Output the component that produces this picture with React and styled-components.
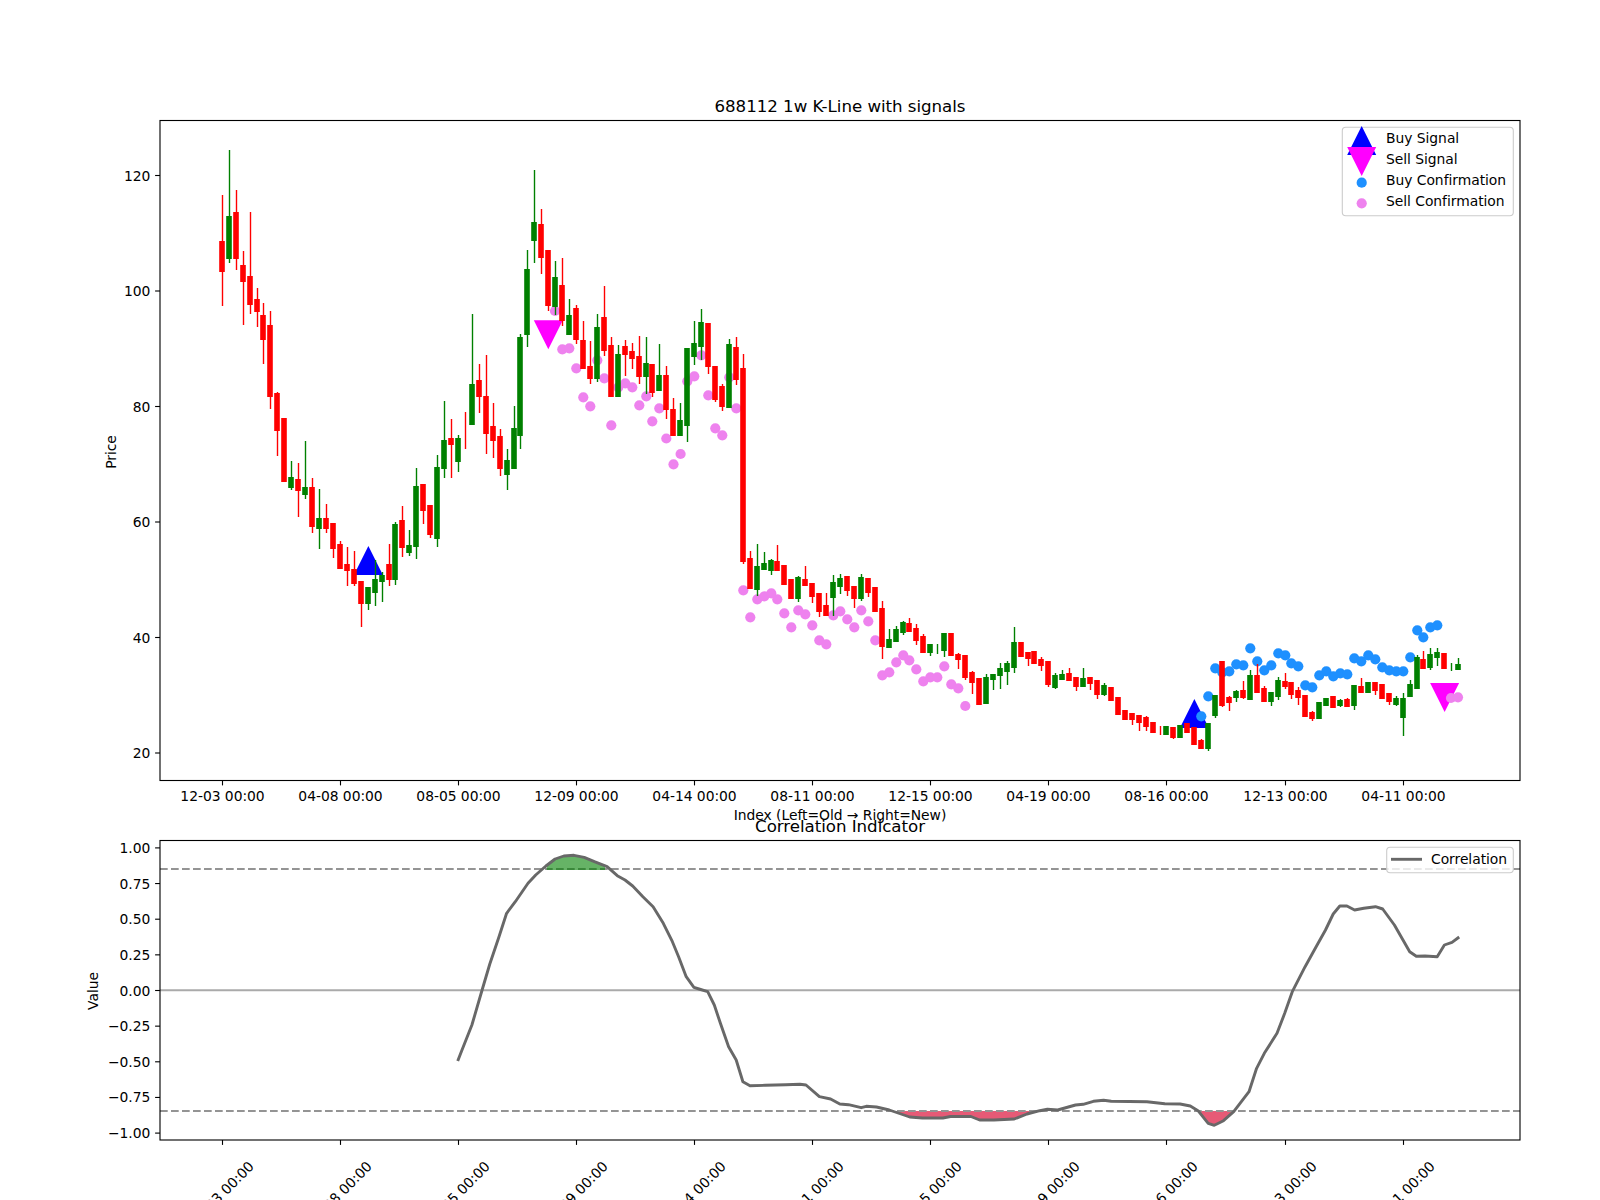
import React from 'react';
import styled, { createGlobalStyle } from 'styled-components';

const GlobalStyle = createGlobalStyle`
  html, body {
    margin: 0;
    background: #fff;
  }
`;

const Figure = styled.div`
  display: flex;
  flex-direction: column;
  width: 1600px;
  height: 1200px;
  overflow: hidden;
  background: #fff;
  font-family: "DejaVu Sans", sans-serif;
`;

const PriceChart = styled.svg`
  display: block;
  flex: none;
  width: 1600px;
  height: 822px;
  overflow: visible;
`;

const CorrelationChart = styled.svg`
  display: block;
  flex: none;
  width: 1600px;
  height: 378px;
  overflow: visible;
`;

const Frame = styled.rect`
  fill: none;
  stroke: #000;
  stroke-width: 1.11px;
`;

const Tick = styled.line`
  stroke: #000;
  stroke-width: 1.11px;
`;

const Label = styled.text`
  font-family: "DejaVu Sans", sans-serif;
  font-size: 13.89px;
  letter-spacing: -0.04px;
  fill: #000;
  text-anchor: ${({ $anchor }) => $anchor || 'middle'};
`;

const Title = styled(Label)`
  font-size: 16.67px;
`;

const Wick = styled.line`
  stroke: ${({ $tone }) => $tone};
  stroke-width: 1.39px;
`;

const Body = styled.rect`
  fill: ${({ $tone }) => $tone};
`;

const Dot = styled.circle`
  fill: ${({ $tone }) => $tone};
`;

const Arrow = styled.polygon`
  fill: ${({ $tone }) => $tone};
`;

const LegendBox = styled.rect`
  fill: rgba(255, 255, 255, 0.8);
  stroke: #ccc;
  stroke-width: 1.11px;
`;

const RefLine = styled.line`
  stroke: ${({ $dashed }) => ($dashed ? '#949494' : '#aaa')};
  stroke-width: 2.08px;
  stroke-dasharray: ${({ $dashed }) => ($dashed ? '7.7 3.3' : 'none')};
`;

const Area = styled.polygon`
  fill: ${({ $tone }) => $tone};
`;

const CurveLine = styled.polyline`
  fill: none;
  stroke: #686868;
  stroke-width: 2.9px;
  stroke-linejoin: round;
`;

const LegendLine = styled.line`
  stroke: #686868;
  stroke-width: 2.9px;
`;

const RED = '#ff0000';
const GREEN = '#008000';
const BLUE = '#0000ff';
const MAGENTA = '#ff00ff';
const DODGER = '#1e90ff';
const VIOLET = '#ee82ee';

// one row per candle: colour, body top, body bottom, wick top, wick bottom (page pixels)
const CANDLES = [
  ['r', 241, 272, 195, 306], ['g', 216, 259, 150, 263], ['r', 212, 259, 190, 270], ['r', 265, 282, 251, 325],
  ['r', 276, 305, 212, 314], ['r', 299, 312, 288, 327], ['r', 315, 340, 303, 364], ['r', 325, 397, 311, 409],
  ['r', 393, 431, 392, 456], ['r', 418, 482, 418, 482], ['g', 477, 488, 461, 490], ['r', 479, 491, 463, 517],
  ['g', 487, 495, 441, 499], ['r', 487, 527, 478, 533], ['g', 518, 529, 489, 549], ['r', 518, 529, 504, 533],
  ['r', 523, 549, 523, 558], ['r', 544, 569, 541, 569], ['r', 564, 571, 547, 586], ['r', 569, 584, 551, 586],
  ['r', 581, 604, 581, 627], ['g', 587, 604, 587, 610], ['g', 579, 593, 560, 606], ['g', 575, 582, 572, 602],
  ['r', 564, 580, 544, 586], ['g', 524, 580, 522, 585], ['r', 520, 548, 506, 557], ['g', 545, 553, 530, 556],
  ['g', 486, 547, 468, 559], ['r', 484, 511, 484, 524], ['r', 505, 535, 505, 538], ['g', 467, 539, 455, 547],
  ['g', 440, 469, 401, 478], ['r', 438, 445, 419, 478], ['g', 438, 462, 435, 472], ['r', 430, 430, 412, 449],
  ['g', 384, 425, 314, 425], ['r', 380, 397, 364, 413], ['r', 396, 434, 355, 454], ['r', 426, 441, 403, 458],
  ['r', 436, 469, 429, 476], ['g', 460, 475, 449, 490], ['g', 428, 469, 406, 469], ['g', 337, 436, 334, 449],
  ['g', 269, 335, 250, 347], ['g', 222, 241, 170, 263], ['r', 224, 258, 209, 274], ['r', 250, 306, 250, 311],
  ['g', 277, 307, 261, 315], ['r', 285, 321, 258, 326], ['g', 315, 335, 299, 335], ['r', 308, 340, 305, 344],
  ['r', 340, 369, 321, 369], ['r', 366, 379, 341, 384], ['g', 327, 379, 314, 382], ['r', 317, 351, 286, 356],
  ['r', 345, 397, 337, 397], ['g', 354, 397, 345, 397], ['r', 346, 355, 340, 376], ['r', 351, 359, 343, 369],
  ['r', 356, 377, 336, 384], ['g', 363, 377, 337, 394], ['r', 364, 393, 364, 397], ['g', 375, 391, 344, 391],
  ['r', 375, 410, 366, 419], ['r', 409, 436, 398, 436], ['g', 420, 436, 403, 436], ['g', 348, 426, 348, 442],
  ['g', 343, 357, 321, 365], ['g', 322, 347, 309, 360], ['r', 323, 367, 323, 374], ['r', 366, 400, 366, 402],
  ['r', 386, 407, 384, 411], ['g', 344, 408, 339, 408], ['r', 347, 380, 337, 385], ['r', 368, 562, 354, 564],
  ['r', 558, 589, 551, 589], ['g', 566, 590, 544, 596], ['g', 563, 570, 552, 570], ['g', 560, 571, 559, 575],
  ['r', 561, 571, 545, 571], ['r', 565, 585, 565, 585], ['r', 579, 599, 579, 599], ['g', 577, 599, 576, 602],
  ['r', 579, 586, 566, 586], ['r', 583, 597, 583, 603], ['r', 593, 612, 593, 617], ['r', 605, 616, 593, 616],
  ['g', 582, 598, 575, 616], ['g', 578, 587, 574, 594], ['r', 576, 591, 576, 596], ['r', 586, 599, 586, 608],
  ['g', 577, 599, 574, 601], ['r', 578, 593, 578, 597], ['r', 587, 612, 587, 612], ['r', 608, 647, 601, 659],
  ['g', 639, 648, 629, 648], ['g', 629, 642, 626, 642], ['g', 622, 633, 621, 635], ['r', 623, 632, 618, 632],
  ['r', 628, 641, 624, 645], ['r', 636, 653, 634, 653], ['g', 644, 653, 644, 656], ['g', 650, 650, 644, 654],
  ['g', 633, 651, 633, 657], ['r', 633, 656, 633, 656], ['r', 654, 660, 653, 669], ['r', 655, 678, 655, 680],
  ['r', 672, 683, 671, 694], ['r', 678, 705, 678, 705], ['g', 677, 704, 674, 704], ['g', 674, 680, 674, 690],
  ['g', 668, 676, 663, 689], ['g', 663, 672, 661, 685], ['g', 642, 668, 627, 673], ['r', 642, 657, 642, 657],
  ['r', 652, 659, 652, 666], ['r', 651, 664, 651, 664], ['r', 659, 666, 657, 671], ['r', 661, 685, 661, 687],
  ['g', 675, 688, 673, 689], ['g', 674, 680, 670, 680], ['r', 673, 681, 668, 681], ['r', 677, 687, 677, 691],
  ['g', 678, 687, 668, 687], ['r', 677, 684, 677, 690], ['r', 680, 695, 680, 699], ['g', 685, 695, 683, 696],
  ['r', 687, 701, 687, 701], ['r', 697, 715, 697, 715], ['r', 710, 720, 710, 720], ['r', 713, 720, 713, 725],
  ['r', 715, 723, 715, 731], ['r', 717, 727, 716, 731], ['r', 722, 733, 722, 733], ['r', 730, 730, 726, 735],
  ['g', 726, 735, 726, 735], ['r', 727, 738, 727, 739], ['g', 725, 738, 725, 738], ['r', 723, 733, 723, 733],
  ['r', 727, 745, 727, 745], ['r', 740, 749, 739, 749], ['g', 723, 749, 723, 751], ['g', 695, 716, 695, 718],
  ['r', 661, 706, 661, 707], ['r', 697, 703, 696, 711], ['g', 691, 698, 690, 702], ['r', 690, 698, 681, 699],
  ['g', 675, 700, 670, 700], ['r', 675, 693, 664, 693], ['r', 688, 702, 686, 702], ['g', 692, 702, 692, 706],
  ['g', 680, 697, 677, 700], ['r', 681, 687, 673, 689], ['r', 682, 695, 682, 699], ['r', 690, 698, 687, 705],
  ['r', 695, 717, 695, 717], ['r', 712, 719, 711, 721], ['g', 702, 719, 702, 719], ['g', 698, 706, 698, 706],
  ['r', 696, 708, 696, 708], ['g', 700, 706, 699, 707], ['r', 699, 707, 698, 707], ['g', 685, 706, 685, 710],
  ['r', 686, 693, 678, 693], ['g', 682, 693, 682, 693], ['r', 682, 691, 682, 695], ['r', 684, 699, 684, 699],
  ['r', 693, 702, 693, 705], ['g', 698, 705, 696, 706], ['g', 698, 718, 693, 736], ['g', 684, 697, 680, 697],
  ['g', 657, 689, 655, 689], ['r', 659, 669, 651, 669], ['g', 654, 668, 648, 670], ['g', 652, 658, 648, 666],
  ['r', 653, 669, 653, 669], ['g', 667, 667, 663, 671], ['g', 664, 670, 658, 670],
];

const SELL_DOTS = [
  [555, 311], [562.3, 349.3], [569.3, 348.3], [576.3, 368.3], [583.3, 397.3], [590.3, 406.3], [597.3, 360.3],
  [604.3, 378.3], [611.3, 425.3], [618.3, 387.3], [625.3, 383.3], [632.3, 387.3], [639.3, 405.3], [646.3, 396.3],
  [652.3, 421.3], [659.3, 408.3], [666.3, 438.5], [673.5, 464.3], [680.6, 454], [687.3, 381.3], [694.3, 376.3],
  [701.3, 355.3], [708.3, 395.3], [715.3, 428.3], [722.3, 435.3], [729.3, 377.3], [736.3, 408.3], [743.3, 590.3],
  [750.3, 617.3], [757.3, 599.3], [764.3, 596.3], [771.3, 593.3], [777.3, 599.3], [784.3, 613.3], [791.3, 627.3],
  [798.3, 610.3], [805.3, 614.3], [812.3, 625.3], [819.3, 640.3], [826.3, 644.3], [833.3, 615.3], [840.3, 611.3],
  [847.3, 619.3], [854.3, 627.3], [861.3, 610.3], [868.3, 621.3], [875.3, 640.3], [882.3, 675.3], [889.3, 672.3],
  [896.3, 662.3], [903.3, 655.3], [909.3, 660.3], [916.3, 669.3], [923.3, 681.3], [930.3, 677.3], [937.3, 677.3],
  [944.3, 666.3], [951.3, 684.3], [958.3, 688.3], [965.3, 706], [1451, 698], [1458, 697.3],
];

const BUY_DOTS = [
  [1201.3, 716.3], [1208.3, 696.3], [1215.3, 668.3], [1222.3, 672.3], [1229.3, 671.3], [1236.3, 664.3],
  [1243.3, 665.3], [1250.3, 648.3], [1257.3, 661.3], [1264.3, 670.3], [1271.3, 665.3], [1278.3, 653.3],
  [1285.3, 655.3], [1291.3, 663.3], [1298.3, 666.3], [1305.3, 685.3], [1312.3, 687.3], [1319.3, 675.3],
  [1326.3, 671.3], [1333.3, 676.3], [1340.3, 673.3], [1347.3, 674.3], [1354.3, 658.3], [1361.3, 661.3],
  [1368.3, 655.3], [1375.3, 659.3], [1382.3, 667.3], [1389.3, 670.3], [1396.3, 671.3], [1403.3, 671.3],
  [1410.3, 657.3], [1417.3, 630.3], [1423.3, 637.3], [1430.3, 627.3], [1437.3, 625.3],
];

const CURVE = [
  [457.7, 1061], [461.7, 1050.7], [471.9, 1025], [482.1, 990], [489.8, 964], [499, 936.7], [506.6, 913.3],
  [515.3, 901.7], [528, 883.3], [535.7, 875], [545.9, 866], [555.1, 859], [563.8, 856], [574, 855.3],
  [584.2, 857.3], [594.4, 861.7], [607.1, 866.7], [617.3, 875.7], [625, 880], [632.7, 886], [642.9, 896.7],
  [653.1, 906.7], [663.3, 923.3], [672.4, 941.7], [678.6, 956.7], [686.2, 976.7], [693.9, 987.3], [699, 989],
  [707.7, 991.7], [714.3, 1005], [720.4, 1023.3], [728.6, 1046.7], [736.2, 1060], [742.9, 1081.7], [750, 1085.7],
  [765.3, 1085.3], [785.7, 1084.7], [800, 1084.3], [806, 1085], [819.4, 1096.7], [830.6, 1099], [839.8, 1104],
  [848.5, 1104.7], [861.2, 1107.7], [866.3, 1106.3], [876.5, 1107], [889.3, 1110], [899.5, 1113.5], [909.7, 1117],
  [922.4, 1118], [942.9, 1118], [950.5, 1116.5], [970.9, 1116.5], [979.6, 1120], [993.9, 1120], [1014.3, 1119],
  [1027, 1114], [1039.8, 1110.7], [1047.4, 1109.3], [1057.7, 1110], [1075.5, 1105], [1083.2, 1104.3], [1093.4, 1101.3],
  [1103.6, 1100.3], [1111.2, 1101.3], [1146.9, 1101.7], [1164.8, 1103.7], [1180.1, 1104], [1190.3, 1106], [1198, 1110.7],
  [1208.2, 1123.3], [1214.3, 1125.3], [1223.5, 1120.7], [1233.7, 1111.7], [1249, 1091.7], [1256.6, 1068.3],
  [1264.3, 1053.3], [1277, 1033.3], [1284.7, 1013.3], [1292.3, 991.7], [1305.1, 966.7], [1315.3, 948.3],
  [1325.5, 930], [1333.2, 914], [1339.8, 906], [1346.9, 906], [1354.6, 910], [1363.8, 908.3], [1375.5, 906.7],
  [1382.7, 909], [1394.4, 925], [1409.7, 951.7], [1416.3, 956.3], [1425, 956], [1437.2, 956.7], [1444.4, 945],
  [1452, 942.3], [1459.2, 937],
];

const DATES = ['12-03', '04-08', '08-05', '12-09', '04-14', '08-11', '12-15', '04-19', '08-16', '12-13', '04-11'];
const PRICE_TICKS = [[120, 175.5], [100, 291], [80, 406.5], [60, 522], [40, 637.5], [20, 753]];
const VALUE_TICKS = ['1.00', '0.75', '0.50', '0.25', '0.00', '\u22120.25', '\u22120.50', '\u22120.75', '\u22121.00'];
const HIGH = 869;
const LOW = 1111;

// the candles fall on whole pixels, so the spacing runs 7,7,7,... with a 6 now and then
const candleX = (i) => Math.floor(222.31 + 6.946 * i);
const tickX = (n) => candleX(n * 17) + 0.5;
const toPoints = (list) => list.map(([x, y]) => `${x},${y}`).join(' ');
const upArrow = (x, y) => toPoints([[x, y], [x - 14.5, y + 29], [x + 14.5, y + 29]]);
const downArrow = (x, y) => toPoints([[x - 14.5, y], [x + 14.5, y], [x, y + 29]]);

// curve section between two x values, closed along the threshold line
const areaPoints = (from, to, level) => {
  const inner = CURVE.filter(([x]) => x > from && x < to);
  const at = (x) => {
    const next = CURVE.findIndex(([px]) => px >= x);
    const [x0, y0] = CURVE[next - 1];
    const [x1, y1] = CURVE[next];
    return y0 + ((x - x0) / (x1 - x0)) * (y1 - y0);
  };
  return toPoints([[from, level], [from, at(from)], ...inner, [to, at(to)], [to, level]]);
};

function Candle({ index, row }) {
  const [kind, top, bottom, high, low] = row;
  const tone = kind === 'r' ? RED : GREEN;
  const x = candleX(index);
  return (
    <g>
      <Wick $tone={tone} x1={x + 0.5} x2={x + 0.5} y1={high} y2={low} />
      <Body $tone={tone} x={x - 2.8} width={5.6} y={top} height={bottom - top} />
    </g>
  );
}

function SignalLegend() {
  const rows = ['Buy Signal', 'Sell Signal', 'Buy Confirmation', 'Sell Confirmation'];
  return (
    <g>
      <LegendBox x={1342.3} y={127.3} width={171} height={88.4} rx={3.5} />
      <Arrow $tone={BLUE} points={upArrow(1361.7, 126)} />
      <Arrow $tone={MAGENTA} points={downArrow(1361.7, 147)} />
      <Dot $tone={DODGER} cx={1361.7} cy={182.7} r={5.1} />
      <Dot $tone={VIOLET} cx={1361.7} cy={203.3} r={5.1} />
      {rows.map((text, n) => (
        <Label key={text} $anchor="start" x={1386} y={143.2 + n * 20.8}>{text}</Label>
      ))}
    </g>
  );
}

export default function App() {
  return (
    <Figure>
      <GlobalStyle />
      <PriceChart viewBox="0 0 1600 822">
        <Title x={840} y={112}>688112 1w K-Line with signals</Title>
        <Arrow $tone={BLUE} points={upArrow(368.4, 546)} />
        <Arrow $tone={MAGENTA} points={downArrow(548.3, 320.3)} />
        <Arrow $tone={BLUE} points={upArrow(1194.4, 699)} />
        <Arrow $tone={MAGENTA} points={downArrow(1444.6, 683)} />
        {SELL_DOTS.map(([x, y]) => <Dot key={x} $tone={VIOLET} cx={x} cy={y} r={5.1} />)}
        {BUY_DOTS.map(([x, y]) => <Dot key={x} $tone={DODGER} cx={x} cy={y} r={5.1} />)}
        {CANDLES.map((row, i) => <Candle key={i} index={i} row={row} />)}
        <Frame x={160} y={120.5} width={1360} height={660} />
        {DATES.map((date, n) => (
          <g key={date}>
            <Tick x1={tickX(n)} x2={tickX(n)} y1={780.5} y2={785.4} />
            <Label x={tickX(n)} y={801}>{`${date} 00:00`}</Label>
          </g>
        ))}
        {PRICE_TICKS.map(([value, y]) => (
          <g key={value}>
            <Tick x1={155.1} x2={160} y1={y} y2={y} />
            <Label $anchor="end" x={150.3} y={y + 5.1}>{value}</Label>
          </g>
        ))}
        <Label x={840} y={820}>Index (Left=Old → Right=New)</Label>
        <Label transform="rotate(-90 116 452)" x={116} y={452}>Price</Label>
        <SignalLegend />
      </PriceChart>
      <CorrelationChart viewBox="0 822 1600 378">
        <Title x={840} y={832}>Correlation Indicator</Title>
        <Area $tone="rgba(220, 20, 60, 0.7)" points={areaPoints(894, 1032, LOW)} />
        <Area $tone="rgba(220, 20, 60, 0.7)" points={areaPoints(1200.5, 1232, LOW)} />
        <RefLine x1={160} x2={1520} y1={990.2} y2={990.2} />
        <RefLine $dashed x1={160} x2={1520} y1={HIGH} y2={HIGH} />
        <RefLine $dashed x1={160} x2={1520} y1={LOW} y2={LOW} />
        <Area $tone="rgba(0, 128, 0, 0.6)" points={areaPoints(546.7, 605, HIGH + 1)} />
        <CurveLine points={toPoints(CURVE)} />
        <Frame x={160} y={840.5} width={1360} height={299.5} />
        {DATES.map((date, n) => (
          <g key={date}>
            <Tick x1={tickX(n)} x2={tickX(n)} y1={1140} y2={1144.9} />
            <Label
              transform={`rotate(-45 ${tickX(n) - 1} 1193.5)`}
              x={tickX(n) - 1}
              y={1198.5}
            >
              {`${date} 00:00`}
            </Label>
          </g>
        ))}
        {VALUE_TICKS.map((text, n) => (
          <g key={text}>
            <Tick x1={155.1} x2={160} y1={847.9 + n * 35.65} y2={847.9 + n * 35.65} />
            <Label $anchor="end" x={150.3} y={852.9 + n * 35.65}>{text}</Label>
          </g>
        ))}
        <Label transform="rotate(-90 98 991)" x={98} y={991}>Value</Label>
        <LegendBox x={1386.7} y={847.3} width={126.6} height={25.4} rx={3.5} />
        <LegendLine x1={1391} x2={1422} y1={859.3} y2={859.3} />
        <Label $anchor="start" x={1431} y={864.3}>Correlation</Label>
      </CorrelationChart>
    </Figure>
  );
}
